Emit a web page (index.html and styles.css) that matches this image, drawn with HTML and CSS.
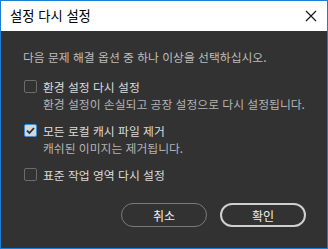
FILE: index.html
```html
<!DOCTYPE html>
<html lang="ko">
<head>
  <meta charset="UTF-8">
  <meta name="viewport" content="width=device-width, initial-scale=1.0">
  <title>설정 다시 설정</title>
  <link rel="stylesheet" href="styles.css">
</head>
<body>
  <div class="dialog">
    <div class="titlebar">
      <span class="title">설정 다시 설정</span>
      <button class="close" aria-label="닫기">
        <svg width="12" height="12" viewBox="0 0 12 12">
          <path d="M1 1 L11 11 M11 1 L1 11" stroke="#111" stroke-width="1.1" fill="none"/>
        </svg>
      </button>
    </div>

    <div class="content">
      <p class="intro">다음 문제 해결 옵션 중 하나 이상을 선택하십시오.</p>

      <div class="options">
        <div class="option">
          <label class="option-label">
            <span class="box"></span>
            <span>환경 설정 다시 설정</span>
          </label>
          <p class="option-desc">환경 설정이 손실되고 공장 설정으로 다시 설정됩니다.</p>
        </div>

        <div class="option">
          <label class="option-label">
            <span class="box checked">
              <svg width="11" height="11" viewBox="0 0 11 11">
                <path d="M2 5.6 L4.4 8 L9 3" stroke="#2c2c2c" stroke-width="1.8" fill="none"/>
              </svg>
            </span>
            <span>모든 로컬 캐시 파일 제거</span>
          </label>
          <p class="option-desc">캐쉬된 이미지는 제거됩니다.</p>
        </div>

        <div class="option">
          <label class="option-label">
            <span class="box"></span>
            <span>표준 작업 영역 다시 설정</span>
          </label>
        </div>
      </div>

      <div class="actions">
        <button class="btn">취소</button>
        <button class="btn btn-primary">확인</button>
      </div>
    </div>
  </div>
</body>
</html>
```

FILE: styles.css
```css
body {
  margin: 0;
  padding: 0;
  font-family: "Noto Sans CJK KR", "Noto Sans", sans-serif;
  background-color: #323232;
}
.dialog {
  width: 328px;
  height: 249px;
  box-sizing: border-box;
  border: 1px solid #1a7ed6;
  background-color: #323232;
  display: flex;
  flex-direction: column;
}
.titlebar {
  height: 30px;
  background-color: white;
  display: flex;
  align-items: center;
  justify-content: space-between;
  padding: 0 9px 0 9px;
  flex-shrink: 0;
}
.title {
  font-size: 13.3px;
  color: #000;
  line-height: 17px;
  margin-top: -1px;
}
.close {
  border: none;
  background: none;
  padding: 0;
  width: 14px;
  height: 14px;
  display: flex;
  align-items: center;
  justify-content: center;
  margin-top: -1px;
}
.content {
  padding: 18px 21px 0 22px;
  flex: 1;
  display: flex;
  flex-direction: column;
}
.intro {
  margin: 0;
  font-size: 11.8px;
  line-height: 16px;
  color: #bdbdbd;
}
.options {
  margin-top: 13px;
  display: flex;
  flex-direction: column;
  gap: 10px;
}
.option-label {
  display: flex;
  align-items: center;
  gap: 6px;
  font-size: 11.8px;
  line-height: 17px;
  color: #dcdcdc;
}
.box {
  width: 13px;
  height: 13px;
  box-sizing: border-box;
  border: 1px solid #6b6b6b;
  border-radius: 2px;
  margin-left: 1px;
  display: flex;
  align-items: center;
  justify-content: center;
}
.box.checked {
  border-color: #3c8fe0;
  background-color: #d6d6d6;
}
.option-desc {
  margin: 0 0 0 20px;
  font-size: 11.8px;
  line-height: 17px;
  color: #b4b4b4;
}
.actions {
  margin-top: 20px;
  display: flex;
  justify-content: flex-end;
  gap: 13px;
}
.btn {
  width: 86px;
  height: 24px;
  border: 1px solid #7a7a7a;
  border-radius: 12px;
  background: transparent;
  color: #f0f0f0;
  font-family: inherit;
  font-size: 12px;
  padding: 0;
  cursor: pointer;
}
.btn-primary {
  border: 2px solid #cfcfcf;
}
```
